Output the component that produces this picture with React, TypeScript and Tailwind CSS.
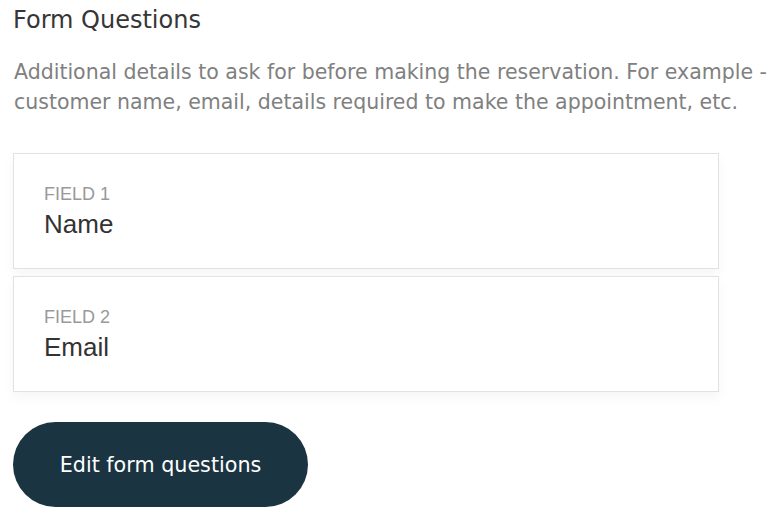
export default function App() {
  return (
    <div className="w-[776px] h-[518px] bg-white pl-[13px] pt-[3px] overflow-hidden" style={{ fontFamily: "'DejaVu Sans', sans-serif" }}>
      <h1 className="text-[24px] leading-[34px] text-[#363636] font-normal">Form Questions</h1>
      <p className="mt-[20px] text-[20.5px] leading-[30px] text-[#808080] w-[762px] pl-[1px]">
        Additional details to ask for before making the reservation. For example - customer name, email, details required to make the appointment, etc.
      </p>
      <div className="mt-[36px] flex flex-col gap-[7px] w-[706px]" style={{ fontFamily: "'Liberation Sans', Arial, sans-serif" }}>
        {[
          ["FIELD 1", "Name"],
          ["FIELD 2", "Email"],
        ].map(([label, value]) => (
          <div key={label} className="h-[116px] border border-[#e2e2e2] bg-white shadow-[0_6px_12px_rgba(0,0,0,0.04)] pl-[30px] pt-[29px]">
            <div className="text-[18px] leading-[22px] text-[#999999]">{label}</div>
            <div className="text-[26px] leading-[32px] text-[#333333] mt-[3px]">{value}</div>
          </div>
        ))}
      </div>
      <button className="mt-[30px] w-[295px] h-[85px] rounded-full bg-[#1b3441] text-white text-[20.7px] pt-[3px]">
        Edit form questions
      </button>
    </div>
  );
}
